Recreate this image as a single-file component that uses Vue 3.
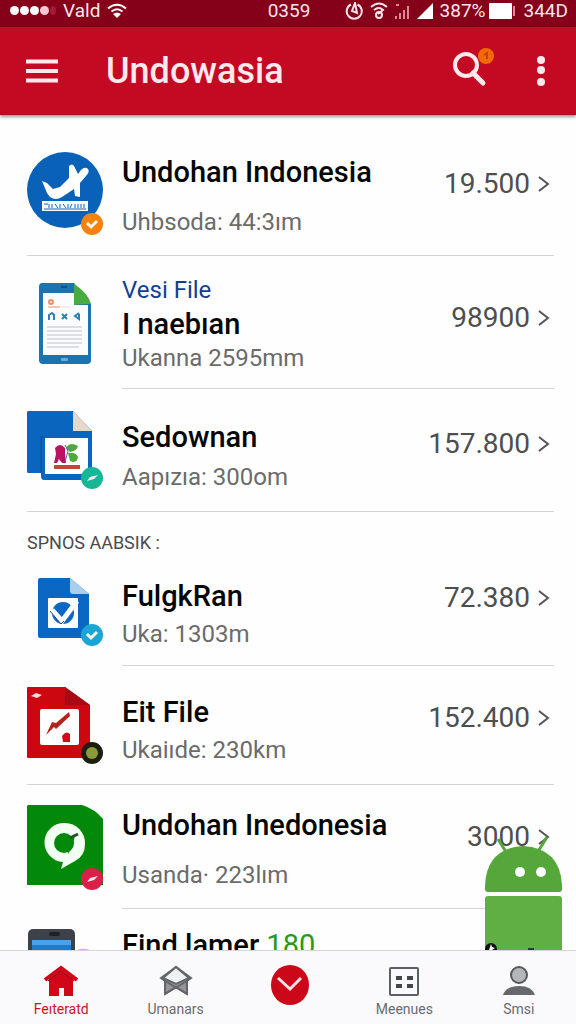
<template>
  <div class="app">
    <div class="status">
      <div class="status__group">
        <span class="dots"><i v-for="n in 5" :key="n" class="dot"></i></span>
        <span>Vald</span>
        <svg width="20" height="16" viewBox="0 0 20 16" fill="none" stroke="#fff" stroke-width="2">
          <path d="M1 5.500Q10-2 19 5.500M4.500 8.500Q10 4 15.500 8.500" />
          <path d="M6 11q4-3 8 0l-4 4z" fill="#fff" stroke="none" />
        </svg>
      </div>
      <span class="status__time">0359</span>
      <div class="status__group status__group--end">
        <svg width="18" height="18" viewBox="0 0 18 18" fill="none" stroke="#ffe4ea" stroke-width="2">
          <path d="M6 2.500A7.500 7.500 0 1 0 12.500 2.500M10 1L7 9l5 2z" />
        </svg>
        <svg width="18" height="18" viewBox="0 0 18 18" fill="none" stroke="#ffe4ea" stroke-width="2">
          <path d="M1 5Q9-2 17 5M4 8q5-4 9 0l-5 4" />
          <circle cx="9" cy="13" r="3" />
        </svg>
        <svg width="15" height="18" viewBox="0 0 15 18" fill="#dc8795">
          <path d="M0 17v-3h2v3zM4 17v-6h2v6zM8 17V8h2v9zM12 17V4h2v13zM1 2h3v2H1z" />
        </svg>
        <svg width="16" height="18" viewBox="0 0 16 18" fill="#fff"><path d="M0 17L16 1v16z" /></svg>
        <span class="status__battery">387%</span>
        <svg width="27" height="18" viewBox="0 0 27 18">
          <rect x="0" y="1" width="23" height="16" rx="1" fill="#fff" />
          <path d="M25 4v10" stroke="#dc8795" stroke-width="2" />
        </svg>
        <span>344D</span>
      </div>
    </div>

    <header class="bar">
      <button class="bar__btn" aria-label="Menu">
        <svg width="32" height="26" viewBox="0 0 32 26" stroke="#ffe9ed" stroke-width="4">
          <path d="M0 3.500h32M0 13h32M0 22.500h32" />
        </svg>
      </button>
      <h1 class="bar__title">Undowasia</h1>
      <button class="bar__btn bar__btn--search" aria-label="Search">
        <svg width="44" height="42" viewBox="0 0 44 42">
          <circle cx="14" cy="19" r="11" fill="none" stroke="#ffe9ed" stroke-width="4" />
          <path d="M21 27l10 10" stroke="#ffe9ed" stroke-width="5" stroke-linecap="round" />
          <circle cx="34" cy="10" r="8" fill="#f26a05" />
          <path d="M32 9l3-2v6" fill="none" stroke="#c2410c" stroke-width="2" />
        </svg>
      </button>
      <button class="bar__btn" aria-label="More">
        <svg width="10" height="30" viewBox="0 0 10 30" fill="#ffe9ed">
          <circle cx="5" cy="4" r="4" /><circle cx="5" cy="14" r="4" /><circle cx="5" cy="26" r="4" />
        </svg>
      </button>
    </header>

    <main class="content">
      <div class="scroll">
        <template v-for="row in rows" :key="row.id">
          <h2 v-if="row.section" class="section">{{ row.section }}</h2>
          <a href="#" class="row" :class="['row--' + row.size, { 'row--inset': row.inset }]">
            <svg class="row__icon" viewBox="0 0 76 84" aria-hidden="true">
              <g v-if="row.icon === 'plane'">
                <circle cx="38" cy="38" r="38" fill="#0a62b8" />
                <path d="M15 29l5 2 6 6 7-2 9-9V14q3-3 5 0l4 8 3-4q4-4 7-1 2 3-2 7l-6 7v14l-5-1-1-7-12 8q-6 4-12 0l-3-4z" fill="#fff" />
                <path d="M15 49h46v10H15z" fill="#fff" />
                <path d="M17 52h4m1 0v4m3-4v4m3-4l3 4m2-4v4m3-4l3 4m2-4v4m4-4l-2 4m5-4v4m3-4v4m3-4v4m3-4v4M17 57h42" fill="none" stroke="#0a62b8" stroke-width="1" />
              </g>
              <g v-else-if="row.icon === 'tablet'">
                <path d="M15 2h32l17 21v56q0 4-4 4H16q-4 0-4-4V6q0-4 3-4z" fill="#1b73b0" />
                <path d="M16 12h31v12h14v50H16z" fill="#fafcff" />
                <path d="M47 3q14 9 17 20-9 0-17 1z" fill="#49a942" />
                <circle cx="24" cy="21" r="2" fill="none" stroke="#ee8e62" stroke-width="2" />
                <path d="M21 26h12" stroke="#ee8e62" stroke-width="1" />
                <path d="M34 26h10" stroke="#f5d9d3" stroke-width="1" />
                <path d="M22 39v-5l3-2 2 2v5m8-6l5 5m0-5l-5 5m17-6l-4 3 4 3v-5" fill="none" stroke="#2d83ae" stroke-width="2" />
                <path d="M20 46h35M20 50h35M20 54h35M20 58h35M20 62h35M20 66h32" stroke="#bcc1c6" stroke-width="1" />
                <rect x="34" y="77" width="7" height="3" rx="1" fill="#68acd7" />
                <path d="M34 6h6" stroke="#135184" stroke-width="2" />
              </g>
              <g v-else-if="row.icon === 'image'">
                <path d="M1 3h45l19 20v46q0 3-3 3H17q-3 0-3-4v-3H1q-1 0-1-2V5q0-2 1-2z" fill="#0965bd" />
                <path d="M14 65V29h4" fill="none" stroke="#0752a1" stroke-width="1" />
                <path d="M46 3l19 20H46z" fill="#e6d9ca" />
                <path d="M18 30h43v36H18z" fill="#fff" />
                <path d="M28 40q5-6 10 0v6l1 9h-4l-3-4-2 4h-3l2-9z" fill="#bd1261" />
                <path d="M39 40q4-7 12-2-1 5-8 6zM41 45q8-1 10 4-1 7-8 4z" fill="#50a83c" />
                <path d="M38 37l3 6-3 11" fill="none" stroke="#4568aa" stroke-width="1" />
                <path d="M27 59h26" stroke="#bf4835" stroke-width="4" />
              </g>
              <g v-else-if="row.icon === 'check'">
                <path d="M13 6h30l19 16v42q0 2-2 2H13q-2 0-2-2V8q0-2 2-2z" fill="#0a68c4" />
                <path d="M43 6l19 16H46q-3 0-3-3z" fill="#a9cff0" />
                <rect x="21" y="26" width="30" height="30" rx="1" fill="#fff" />
                <circle cx="36" cy="41" r="11" fill="#0a68c4" />
                <path d="M25 38l10 11 15-20" fill="none" stroke="#fff" stroke-width="5" />
                <path d="M23 39l11 13 3-3" fill="none" stroke="#17497e" stroke-width="1" />
              </g>
              <g v-else-if="row.icon === 'edit'">
                <path d="M1 4h37l25 18v53H1q-1 0-1-1V5q0-1 1-1z" fill="#cd0710" />
                <path d="M38 4l25 18H38z" fill="#a90915" />
                <path d="M4 13l5-3 6 2-5 3z" fill="#ffd9dc" />
                <rect x="13" y="26" width="39" height="36" rx="2" fill="#fff" />
                <path d="M42 29l1 4-14 13-2-2-8 8 6-13 4 1z" fill="#b72218" />
                <path d="M35 53q4-6 8-2v8h-7z" fill="#c9101a" />
              </g>
              <g v-else-if="row.icon === 'chat'">
                <path d="M1 0h54q13 4 21 14v66H0V1z" fill="#038909" />
                <path d="M38 18a20 20 0 0 1 20 21q0 12-10 17l-14 8 2-7a19 19 0 0 1 2-39z" fill="#f4fff4" />
                <circle cx="37" cy="38" r="10" fill="#038909" />
                <path d="M40 38l8-9-2 12-5 8z" fill="#038909" />
                <path d="M43 33l8-4" stroke="#244f27" stroke-width="3" />
              </g>
              <g v-else>
                <rect x="1" y="8" width="47" height="84" rx="5" fill="#3d4248" />
                <rect x="22" y="11" width="11" height="4" rx="2" fill="#1e2226" />
                <path d="M5 19h39v60H5z" fill="#1d7bd0" />
                <path d="M5 19h39v5H5z" fill="#4aa3e8" />
                <path d="M48 30q7-4 15-1v20H48z" fill="#e8bb61" />
              </g>
              <g v-if="row.badge" :transform="`translate(65 ${row.badge.y})`">
                <circle r="11" :fill="row.badge.color" />
                <circle v-if="row.badge.mark === 'dot'" r="6" fill="#8b9b3c" />
                <path v-else-if="row.badge.mark === 'dash'" d="M-5 3l3-4 8-2-4 4z" fill="#ffe8ed" />
                <path v-else d="M-5-1l4 4 6-6" fill="none" stroke="#fff4e8" stroke-width="3" />
              </g>
            </svg>
            <div class="row__body">
              <div class="row__text">
                <span v-if="row.kicker" class="row__kicker">{{ row.kicker }}</span>
                <span class="row__title">{{ row.title }} <span v-if="row.count" class="row__count">{{ row.count }}</span></span>
                <span v-if="row.sub" class="row__sub">{{ row.sub }}</span>
              </div>
              <span v-if="row.value" class="row__value">
                {{ row.value }}
                <svg width="12" height="18" viewBox="0 0 12 18" fill="none" stroke="#555" stroke-width="2">
                  <path d="M1 2l9 7-9 7" />
                </svg>
              </span>
            </div>
          </a>
        </template>
      </div>

      <svg class="robot" width="80" height="114" viewBox="0 0 80 114" aria-hidden="true">
        <path d="M14 3l8 13M55 14l8-13" stroke="#55a63a" stroke-width="3" fill="none" />
        <path d="M1 53v-4q2-37 38-39 37 2 39 39v4q0 3-3 3H4q-3 0-3-3z" fill="#55a73a" />
        <circle cx="36" cy="36" r="5" fill="#fff" /><circle cx="57" cy="36" r="5" fill="#fff" />
        <path d="M4 60h71q3 0 3 3v51H1V63q0-3 3-3z" fill="#60af43" />
        <circle cx="7" cy="113" r="6" fill="#111" />
        <path d="M7 108l1 3 3 1-3 2H5z" fill="#fff" />
        <path d="M44 112h6v2h-6z" fill="#26421d" />
      </svg>
    </main>

    <nav class="tabs">
      <a v-for="tab in tabs" :key="tab.icon" href="#" class="tab" :class="{ 'tab--active': tab.active }" :aria-label="tab.label || 'Open'">
        <svg v-if="tab.icon === 'home'" width="34" height="32" viewBox="0 0 34 32">
          <path d="M5 14L17 5l12 9v17h-9v-8h-5v8H5z" fill="#d00719" />
          <path d="M1 15L17 3l16 12" fill="none" stroke="#d00719" stroke-width="4" />
          <path d="M4 16L17 6l13 10" fill="none" stroke="#990817" stroke-width="1" />
        </svg>
        <svg v-else-if="tab.icon === 'box'" width="34" height="32" viewBox="0 0 34 32" stroke="#62666a" stroke-width="2">
          <path d="M17 2L2 13l4 3v13l11-7 11 7V16l4-3z" fill="#92969a" />
          <path d="M17 2L4 13l13 6 13-6z" fill="#eef1f4" />
          <path d="M6 16l22 13M28 16L6 29" fill="none" />
        </svg>
        <svg v-else-if="tab.icon === 'down'" width="38" height="40" viewBox="0 0 38 40">
          <ellipse cx="19" cy="20" rx="19" ry="20" fill="#cc0719" />
          <path d="M7 13l12 11 11-11" fill="none" stroke="#ffe4e8" stroke-width="3" />
        </svg>
        <svg v-else-if="tab.icon === 'grid'" width="32" height="32" viewBox="0 0 32 32">
          <rect x="2" y="3" width="28" height="27" rx="1" fill="none" stroke="#5c5f63" stroke-width="2" />
          <path d="M8 13h6M19 13h6M8 21h6M19 21h6" stroke="#44474a" stroke-width="4" />
        </svg>
        <svg v-else width="34" height="32" viewBox="0 0 34 32">
          <circle cx="17" cy="10" r="8" fill="#b4b6ba" stroke="#55585c" stroke-width="2" />
          <path d="M1 30q3-9 16-9t16 9z" fill="#65686c" />
        </svg>
        <span v-if="tab.label">{{ tab.label }}</span>
      </a>
    </nav>
  </div>
</template>

<script setup>
const rows = [
  { id: 1, icon: 'plane', size: 'lg', title: 'Undohan Indonesia', sub: 'Uhbsoda: 44:3ım', value: '19.500', badge: { y: 72, color: '#f5820b' } },
  { id: 2, icon: 'tablet', size: 'stack', inset: true, kicker: 'Vesi File', title: 'I naebıan', sub: 'Ukanna 2595mm', value: '98900' },
  { id: 3, icon: 'image', size: 'md', title: 'Sedownan', sub: 'Aapızıa: 300om', value: '157.800', badge: { y: 70, color: '#16b795', mark: 'dash' } },
  { id: 4, icon: 'check', size: 'sm', inset: true, section: 'SPNOS AABSIK :', title: 'FulgkRan', sub: 'Uka: 1303m', value: '72.380', badge: { y: 63, color: '#1ba5d3' } },
  { id: 5, icon: 'edit', size: 'base', title: 'Eit File', sub: 'Ukaiıde: 230km', value: '152.400', badge: { y: 70, color: '#1d1d10', mark: 'dot' } },
  { id: 6, icon: 'chat', size: 'lg', inset: true, title: 'Undohan Inedonesia', sub: 'Usanda· 223lım', value: '3000', badge: { y: 74, color: '#dc1e49', mark: 'dash' } },
  { id: 7, icon: 'phone', size: 'last', title: 'Find lamer', count: '180' }
]

const tabs = [
  { icon: 'home', label: 'Feıteratd', active: true },
  { icon: 'box', label: 'Umanars' },
  { icon: 'down' },
  { icon: 'grid', label: 'Meenues' },
  { icon: 'user', label: 'Smsi' }
]
</script>

<style>
body { background: #fff; }
</style>

<style scoped>
* { box-sizing: border-box; }
.app { display: flex; flex-direction: column; height: 100vh; font-family: Roboto, "Liberation Sans", sans-serif; color: #060606; background: #fefefe; }
a { color: inherit; text-decoration: none; }
svg { display: block; flex: none; }

.status {
  display: grid; grid-template-columns: 1fr auto 1fr; align-items: center; flex: none;
  height: 27px; padding: 0 8px 6px 10px; background: #850019; color: #ffe4ea; font-size: 19px; line-height: 20px;
}
.status__group { display: flex; align-items: center; gap: 7px; }
.status__battery { margin-right: -3px; }
.status__group--end { justify-content: flex-end; }
.dots { display: flex; gap: 1px; }
.dot { width: 9px; height: 9px; border-radius: 50%; background: #fff; }
.dot:nth-child(4) { background: #ffc6d1; }
.dot:last-child { width: 6px; background: #a51a35; }

.bar {
  position: relative; z-index: 2; display: flex; align-items: center; flex: none;
  height: 88px; padding: 0 30px 0 26px; background: #c40a22; border-bottom: 1px solid #a80d20; box-shadow: 0 2px 3px rgba(0,0,0,.4);
}
.bar__btn { padding: 0; border: 0; background: none; cursor: pointer; }
.bar__btn--search { margin: 0 40px 8px 0; }
.bar__title { flex: 1; margin: 0 0 0 48px; font-size: 36px; line-height: 44px; font-weight: 500; color: #ffe9ed; }

.content { position: relative; flex: 1; min-height: 0; }
.scroll { height: 100%; padding: 17px 22px 0 27px; overflow-y: auto; scrollbar-width: none; }
.section { margin: 0; padding: 21px 0 8px; font-size: 18px; line-height: 20px; font-weight: 400; color: #4b4b4b; }

.row { display: flex; align-items: center; gap: 19px; border-bottom: 1px solid #d4d5d7; }
.row--inset { border-bottom: 0; }
.row--inset .row__body { border-bottom: 1px solid #d4d5d7; }
.row__icon { width: 76px; height: 84px; overflow: visible; }
.row__body { display: flex; flex: 1; align-items: center; justify-content: space-between; min-width: 0; padding: 30px 0 20px; }
.row__text { display: flex; flex-direction: column; gap: 8px; white-space: nowrap; }
.row__kicker { font-size: 24px; line-height: 28px; color: #123f96; }
.row__title { font-size: 29px; line-height: 32px; font-weight: 500; }
.row__count { font-weight: 400; color: #269b19; }
.row__sub { font-size: 24px; line-height: 28px; color: #6b6b6b; }
.row__value { display: flex; align-items: center; gap: 8px; padding: 0 4px 24px 0; font-size: 28px; line-height: 32px; color: #4e4e4e; }

.row--lg .row__body { padding: 24px 0 19px; }
.row--lg .row__text { gap: 20px; }
.row--stack .row__body { padding: 20px 0 16px; }
.row--stack .row__text { gap: 4px; }
.row--stack .row__value { padding-bottom: 12px; }
.row--md .row__body { padding: 32px 0 20px; }
.row--md .row__text { gap: 10px; }
.row--sm .row__body { padding: 19px 0 17px; }
.row--sm .row__value { padding-bottom: 32px; }
.row--last { align-items: flex-start; padding-top: 12px; border-bottom: 0; }
.row--last .row__body { padding: 8px 0 0; }

.robot { position: absolute; right: 12px; bottom: 0; }

.tabs { position: relative; display: grid; grid-template-columns: repeat(5, 1fr); flex: none; height: 74px; padding-left: 4px; background: #fafafc; border-top: 1px solid #d5d6da; }
.tab { display: flex; flex-direction: column; align-items: center; gap: 2px; padding-top: 14px; font-size: 14px; line-height: 20px; color: #696b6f; }
.tab--active { color: #c91628; }
</style>
